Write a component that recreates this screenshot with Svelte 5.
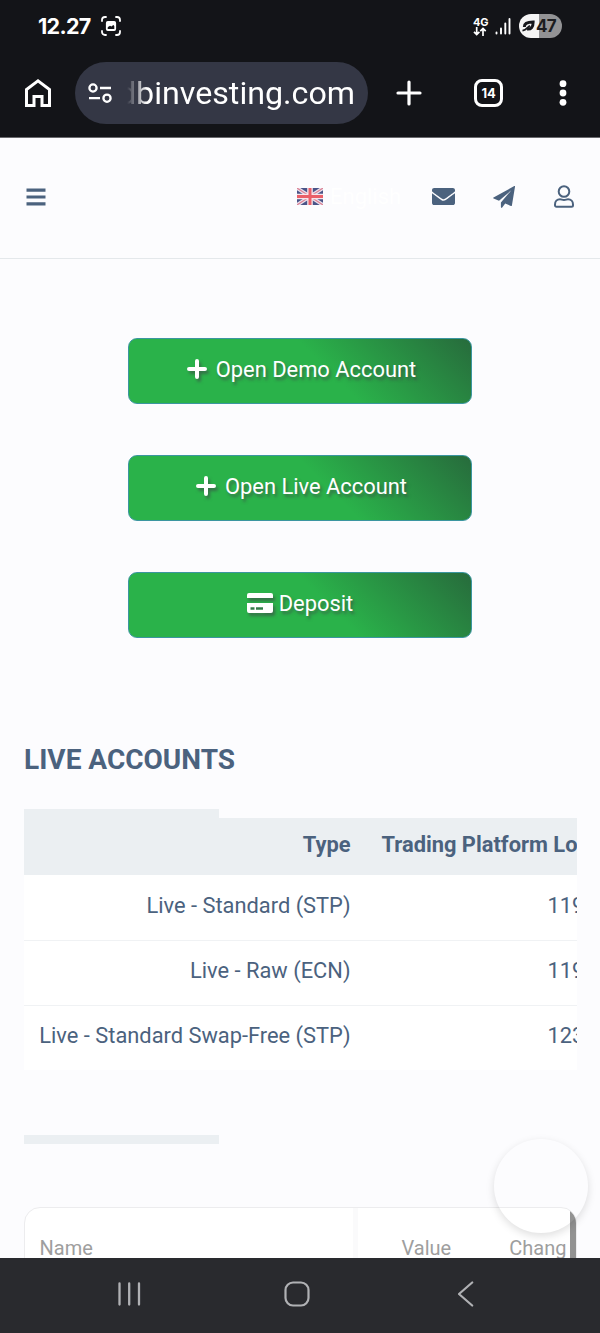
<script lang="ts">
    const actions = [
        { label: "Open Demo Account", icon: "plus" },
        { label: "Open Live Account", icon: "plus" },
        { label: "Deposit", icon: "card" },
    ]

    const accounts = [
        { type: "Live - Standard (STP)", login: "119" },
        { type: "Live - Raw (ECN)", login: "119" },
        { type: "Live - Standard Swap-Free (STP)", login: "123" },
    ]
</script>

<div class="screen">
    <div class="status-bar">
        <span class="clock">12.27</span>
        <svg class="capture" viewBox="0 0 20 20" width="20" height="20" fill="none" stroke="#fff" stroke-width="1.8" stroke-linecap="round">
            <path d="M1 5V4a3 3 0 0 1 3-3h1M15 1h1a3 3 0 0 1 3 3v1M19 15v1a3 3 0 0 1-3 3h-1M5 19H4a3 3 0 0 1-3-3v-1" />
            <rect x="5.8" y="6" width="8.4" height="8" rx="1" />
            <path d="M5.800 6h8.400v4.500l-2-1.500-1.700 1.600-1.500-.8-3.200 2z" fill="#fff" stroke="none" />
        </svg>
        <div class="status-right">
            <div class="network">
                <span>4G</span>
                <svg viewBox="0 0 14 9" width="14" height="9" fill="none" stroke="#fff" stroke-width="1.7">
                    <path d="M3.700 0v7.500M1 4.800l2.700 2.700 2.700-2.700M10 9V1.500M7.300 4.200L10 1.500l2.700 2.700" />
                </svg>
            </div>
            <svg class="signal" viewBox="0 0 16 17" width="16" height="17" stroke="#fff" stroke-width="1.9" stroke-linecap="round">
                <path d="M1.500 14.500v1M6 10.500v5M10.300 5.500v10M14.500 1v14.500" />
            </svg>
            <div class="battery">
                <svg viewBox="0 0 14 12" width="13" height="12" fill="none" stroke="#16171b">
                    <path d="M2.500 7C2.500 3 6 1.800 12 1.800c0 5-2 8-6.500 7.500" stroke-width="3.2" />
                    <path d="M.5 11C4 10.500 6 8 8.500 5.500" stroke-width="1.8" />
                </svg>
                <span>47</span>
            </div>
        </div>
    </div>

    <div class="browser-bar">
        <svg class="home" viewBox="0 0 26 28" width="26" height="28" fill="none" stroke="#fff" stroke-width="3">
            <path d="M1.500 26.500V10.500L13 1.900l11.500 8.600v16h-7.500v-9H9v9z" />
        </svg>
        <div class="address">
            <svg viewBox="0 0 24 20" width="24" height="20" fill="none" stroke="#fff" stroke-width="2.3">
                <circle cx="5" cy="5" r="3.600" />
                <path d="M12 5h11M1 15.200h11" />
                <circle cx="19" cy="15.200" r="3.600" />
            </svg>
            <div class="url"><span>dbinvesting.com</span></div>
        </div>
        <svg class="new-tab" viewBox="0 0 26 26" width="26" height="26" stroke="#fff" stroke-width="3.2" stroke-linecap="round">
            <path d="M13 2v22M2 13h22" />
        </svg>
        <div class="tabs">14</div>
        <svg class="more" viewBox="0 0 8 26" width="8" height="26" fill="#fff">
            <circle cx="4" cy="3.700" r="3.400" />
            <circle cx="4" cy="13" r="3.400" />
            <circle cx="4" cy="22.300" r="3.400" />
        </svg>
    </div>

    <header>
        <svg class="menu" viewBox="0 0 20 18" width="20" height="18" fill="#4b627e">
            <path d="M.5 .5h19v3.200h-19zM.5 7.400h19v3.200h-19zM.5 14.200h19v3.200h-19z" />
        </svg>
        <svg class="flag" viewBox="0 0 26 17" width="26" height="17">
            <rect width="26" height="17" fill="#4a5488" />
            <path d="M0 0l26 17M26 0L0 17" stroke="#e9e0ec" stroke-width="3.6" />
            <path d="M0 0l26 17M26 0L0 17" stroke="#dc7f92" stroke-width="1.1" />
            <path d="M13 0v17M0 8.500h26" stroke="#f6e6ec" stroke-width="5.6" />
            <path d="M13 0v17M0 8.500h26" stroke="#ea5f68" stroke-width="3" />
        </svg>
        <span class="language">English</span>
        <svg class="mail" viewBox="0 64 512 384" width="23" height="17" fill="#4b627e" preserveAspectRatio="none">
            <path d="M502.300 190.800c3.900-3.100 9.700-.2 9.700 4.700V400c0 26.500-21.500 48-48 48H48c-26.500 0-48-21.500-48-48V195.600c0-5 5.700-7.800 9.700-4.700 22.400 17.400 52.100 39.500 154.100 113.600 21.100 15.400 56.700 47.800 92.200 47.600 35.700.3 72-32.800 92.300-47.600 102-74.100 131.600-96.300 154-113.700zM256 320c23.200.4 56.600-29.200 73.400-41.400 132.700-96.300 142.800-104.700 173.400-128.700 5.800-4.500 9.200-11.500 9.200-18.900v-19c0-26.500-21.500-48-48-48H48c-26.500 0-48 21.500-48 48v19c0 7.400 3.400 14.300 9.200 18.900 30.600 23.900 40.700 32.400 173.400 128.700 16.800 12.200 50.200 41.800 73.400 41.400z" />
        </svg>
        <svg class="plane" viewBox="0 0 22 22" width="22" height="22" fill="#4b627e">
            <path d="M21.300.1c.5-.2.800.1.700.6l-3.100 18.700c-.1.500-.5.700-1 .5l-5.700-2.300-3 4c-.5.600-1.300.3-1.300-.5v-4.600L18.300 4.300 6 14.800.6 12.600c-.6-.3-.6-.8-.1-1.100z" />
        </svg>
        <svg class="user" viewBox="0 0 20 23" width="20" height="23" fill="none" stroke="#4b627e" stroke-width="2">
            <circle cx="10" cy="6.500" r="5.300" />
            <path d="M1 19.500c0-3 2-5.200 5-5.200 1.500 0 2.200.8 4 .8s2.500-.8 4-.8c3 0 5 2.200 5 5.200v.8c0 .9-.6 1.500-1.500 1.500h-15C1.600 21.800 1 21.200 1 20.300z" />
        </svg>
    </header>

    <main>
        <div class="actions">
            {#each actions as action}
                <button type="button">
                    {#if action.icon === "plus"}
                        <svg class="plus" viewBox="0 0 20 20" width="20" height="20" stroke="#fff" stroke-width="4" stroke-linecap="round">
                            <path d="M10 2v16M2 10h16" />
                        </svg>
                    {:else}
                        <svg class="card-icon" viewBox="0 0 26 20" width="26" height="20" fill="#fff">
                            <path d="M2 0h22a2 2 0 0 1 2 2v3H0V2a2 2 0 0 1 2-2z" />
                            <path fill-rule="evenodd" d="M0 10h26v8a2 2 0 0 1-2 2H2a2 2 0 0 1-2-2zM3.500 14.200v2.600h4v-2.600zM9 14.200v2.600h7v-2.600z" />
                        </svg>
                    {/if}
                    <span>{action.label}</span>
                </button>
            {/each}
        </div>

        <h2>LIVE ACCOUNTS</h2>
        <div class="scroll-strip"></div>
        <div class="table-wrap">
            <table>
                <thead>
                    <tr><th>Type</th><th class="login">Trading Platform Login</th></tr>
                </thead>
                <tbody>
                    {#each accounts as account}
                        <tr><td>{account.type}</td><td class="login number">{account.login}</td></tr>
                    {/each}
                </tbody>
            </table>
        </div>

        <div class="scroll-strip second"></div>
        <div class="quotes">
            <div class="name">Name</div>
            <div class="values">
                <span>Value</span>
                <span class="change">Chang</span>
            </div>
            <div class="scrollbar"></div>
        </div>
        <div class="bubble"></div>
    </main>

    <nav>
        <svg class="recents" viewBox="0 0 24 24" width="24" height="24" stroke="#b0b1b4" stroke-width="2.3" stroke-linecap="round">
            <path d="M2.500 1.500v21M12.200 1.500v21M22 1.500v21" />
        </svg>
        <svg class="circle" viewBox="0 0 26 26" width="26" height="26" fill="none" stroke="#b0b1b4" stroke-width="2.2">
            <rect x="1.500" y="1.500" width="23" height="23" rx="7.500" />
        </svg>
        <svg class="back" viewBox="0 0 16 26" width="16" height="26" fill="none" stroke="#b0b1b4" stroke-width="2.2" stroke-linecap="round" stroke-linejoin="round">
            <path d="M14.200 1.500L1 13l13.200 11.500" />
        </svg>
    </nav>
</div>

<style>
    .screen {
        display: flex;
        flex-direction: column;
        width: 600px;
        height: 1333px;
        overflow: hidden;
        background: #fcfcfe;
        color: #4b627e;
        font-family: Roboto, sans-serif;
    }

    svg {
        flex-shrink: 0;
        display: block;
    }

    .status-bar {
        display: flex;
        align-items: center;
        height: 52px;
        padding: 0 38px 0 38px;
        box-sizing: border-box;
        background: #131418;
        color: #fff;
    }

    .clock {
        width: 63px;
        font-family: Inter, sans-serif;
        font-size: 21.5px;
        font-weight: 700;
        letter-spacing: -0.7px;
        white-space: nowrap;
    }

    .status-right {
        display: flex;
        align-items: center;
        margin-left: auto;
    }

    .network {
        display: flex;
        flex-direction: column;
        width: 14px;
        margin-right: 8px;
        font-family: Inter, sans-serif;
        font-size: 11px;
        line-height: 10px;
        font-weight: 700;
        letter-spacing: -0.3px;
    }

    .signal {
        margin-right: 8px;
    }

    .battery {
        display: flex;
        align-items: center;
        gap: 1px;
        width: 43px;
        height: 24px;
        padding-left: 3px;
        box-sizing: border-box;
        border-radius: 12px;
        background: linear-gradient(to right, #f4f4f4 20px, #939395 20px);
        color: #1c1d20;
        font-family: Inter, sans-serif;
        font-size: 17px;
        font-weight: 700;
        letter-spacing: -0.8px;
    }

    .browser-bar {
        display: flex;
        align-items: center;
        height: 86px;
        padding: 0 33px 3px 25px;
        box-sizing: border-box;
        background: #131418;
        border-bottom: 1px solid #69696d;
        color: #fff;
    }

    .address {
        display: flex;
        align-items: center;
        gap: 15px;
        width: 293px;
        height: 62px;
        margin-left: 24px;
        padding-left: 13px;
        box-sizing: border-box;
        border-radius: 31px;
        background: #343745;
    }

    .url {
        display: flex;
        justify-content: flex-end;
        width: 228px;
        overflow: hidden;
        font-size: 32.2px;
        line-height: 44px;
        white-space: nowrap;
        mask-image: linear-gradient(to right, transparent, #000 20px);
    }

    .new-tab {
        margin-left: 28px;
    }

    .tabs {
        display: flex;
        align-items: center;
        justify-content: center;
        width: 29px;
        height: 28px;
        margin-left: 52px;
        box-sizing: border-box;
        border: 3px solid #fff;
        border-radius: 8px;
        font-family: Inter, sans-serif;
        font-size: 13px;
        font-weight: 700;
        letter-spacing: -0.3px;
    }

    .more {
        margin-left: auto;
    }

    header {
        display: flex;
        align-items: center;
        height: 121px;
        padding: 0 26px 3px;
        box-sizing: border-box;
        border-bottom: 1px solid #e4e8eb;
    }

    .flag {
        margin-left: 251px;
    }

    .language {
        width: 72px;
        margin-left: 7px;
        color: #fff;
        font-size: 22px;
    }

    .mail {
        margin-left: 30px;
    }

    .plane {
        margin-left: 38px;
    }

    .user {
        margin-left: auto;
    }

    main {
        position: relative;
        flex: 1;
        min-height: 0;
        overflow: hidden;
    }

    .actions {
        display: flex;
        flex-direction: column;
        align-items: center;
        gap: 51px;
        padding-top: 79px;
    }

    button {
        display: flex;
        align-items: center;
        justify-content: center;
        width: 344px;
        height: 66px;
        padding: 0 0 4px;
        border: 1px solid #3b96a0;
        border-radius: 9px;
        background: linear-gradient(45deg, #2ab24a 57%, #276b3c 100%);
        color: #fff;
        font-family: inherit;
        font-size: 21.9px;
        text-shadow: 2px 3px 3px rgba(60, 70, 70, 0.6);
    }

    button svg {
        filter: drop-shadow(2px 3px 1.5px rgba(60, 70, 70, 0.6));
    }

    .plus {
        margin-left: 3px;
        margin-right: 9px;
    }

    .card-icon {
        margin-right: 6px;
    }

    h2 {
        margin: 104px 0 0 24px;
        font-size: 28px;
        line-height: 36px;
        font-weight: 700;
    }

    .scroll-strip {
        width: 195px;
        height: 9px;
        margin: 31px 0 0 23.5px;
        background: #ebeff2;
    }

    .table-wrap {
        width: 553.5px;
        margin-left: 23.5px;
        overflow: hidden;
        background: #fff;
    }

    table {
        width: 760px;
        border-collapse: collapse;
        table-layout: fixed;
    }

    th,
    td {
        width: 343px;
        height: 65px;
        padding: 0 16px 4px 15px;
        box-sizing: border-box;
        border-bottom: 1px solid #f0f2f4;
        font-size: 21.85px;
        text-align: right;
        white-space: nowrap;
    }

    th {
        height: 57px;
        background: #ebeff2;
        border-bottom: 0;
    }

    .login {
        width: 417px;
        text-align: left;
    }

    .number {
        padding-left: 181px;
    }

    tbody tr:last-child td {
        border-bottom: 0;
    }

    .second {
        margin-top: 65px;
    }

    .quotes {
        display: flex;
        width: 553px;
        height: 100px;
        margin: 63px 0 0 23.5px;
        box-sizing: border-box;
        border: 1px solid #ececee;
        border-radius: 16px;
        overflow: hidden;
        background: #fff;
        color: #9e9e9e;
        font-size: 20px;
        line-height: 81px;
    }

    .name {
        width: 313px;
        padding-left: 15px;
        border-right: 5px solid #fafafb;
    }

    .values {
        display: flex;
        flex: 1;
    }

    .values span {
        margin-left: 44px;
    }

    .values .change {
        margin-left: auto;
        margin-right: 3px;
    }

    .scrollbar {
        width: 6px;
        background: #929292;
    }

    .bubble {
        position: absolute;
        right: 12px;
        bottom: 25px;
        width: 94px;
        height: 94px;
        border-radius: 50%;
        box-shadow: 0 3px 9px rgba(0, 0, 0, 0.13);
    }

    nav {
        display: flex;
        align-items: center;
        height: 75px;
        padding: 0 126px 3px 117px;
        box-sizing: border-box;
        background: #292a2e;
    }

    .circle {
        margin-left: 143px;
    }

    .back {
        margin-left: auto;
    }
</style>
